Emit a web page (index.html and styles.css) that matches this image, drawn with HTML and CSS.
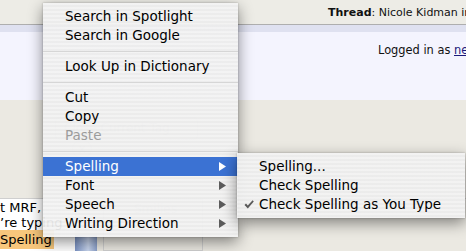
FILE: index.html
```html
<!DOCTYPE html>
<html lang="en">
<head>
  <meta charset="UTF-8" />
  <title>Spelling menu</title>
  <link rel="stylesheet" href="styles.css">
</head>
<body>
  <div class="page">
    <div class="topbar"><b>Thread</b>: Nicole Kidman in</div>
    <div class="band"></div>
    <div class="login">Logged in as <a href="#">newbie</a></div>

    <div class="editor">
      <div class="toolbar">
        <div class="tag-btn">Close Current Tag <span class="x">x</span></div>
      </div>
      <div class="compose">
        <div class="textarea">
          <div>t MRF,</div>
          <div>’re typing</div>
          <div><span class="misspelt">Spelling</span></div>
        </div>
        <div class="scroll"></div>
        <div class="smilies">Smilies</div>
      </div>
    </div>
  </div>

  <!-- context menu -->
  <div class="menu main-menu">
    <div class="item">Search in Spotlight</div>
    <div class="item">Search in Google</div>
    <div class="sep"></div>
    <div class="item">Look Up in Dictionary</div>
    <div class="sep"></div>
    <div class="item">Cut</div>
    <div class="item">Copy</div>
    <div class="item disabled">Paste</div>
    <div class="sep"></div>
    <div class="item sub active">Spelling
      <svg class="arrow" viewBox="0 0 7 9"><path d="M0 0L7 4.5L0 9Z" /></svg>
    </div>
    <div class="item sub">Font
      <svg class="arrow" viewBox="0 0 7 9"><path d="M0 0L7 4.5L0 9Z" /></svg>
    </div>
    <div class="item sub">Speech
      <svg class="arrow" viewBox="0 0 7 9"><path d="M0 0L7 4.5L0 9Z" /></svg>
    </div>
    <div class="item sub">Writing Direction
      <svg class="arrow" viewBox="0 0 7 9"><path d="M0 0L7 4.5L0 9Z" /></svg>
    </div>
  </div>

  <div class="menu sub-menu">
    <div class="item">Spelling...</div>
    <div class="item">Check Spelling</div>
    <div class="item checked">
      <svg class="check" viewBox="0 0 10 9"><path d="M0.5 5L2 3.6L3.8 5.6L8.6 0.3L9.8 1.4L3.8 8.4Z" /></svg>
      Check Spelling as You Type
    </div>
  </div>
</body>
</html>
```

FILE: styles.css
```css
* {
  margin: 0;
  padding: 0;
  box-sizing: border-box;
}

body {
  width: 466px;
  height: 251px;
  overflow: hidden;
  background: #f4f4fe;
  font-family: 'DejaVu Sans', Verdana, sans-serif;
  position: relative;
}

/* Page behind the menu */
.page {
  height: 251px;
  display: flex;
  flex-direction: column;
}

.topbar {
  height: 25px;
  background: #edece6;
  border-bottom: 1px solid #aeaeae;
  padding-left: 328px;
  font-size: 11px;
  line-height: 25px;
  white-space: nowrap;
  overflow: hidden;
  color: #111;
}

.band {
  height: 7px;
  background: #dfe1f0;
}

.login {
  height: 68px;
  padding: 10px 0 0 378px;
  font-size: 11.4px;
  line-height: 16px;
  white-space: nowrap;
  overflow: hidden;
  color: #111;
}

.login a {
  color: #1a1a7a;
}

.editor {
  flex: 1;
  background: #ebe9e2;
  display: flex;
  flex-direction: column;
}

.toolbar {
  height: 98px;
  padding: 17px 0 0 55px;
}

.tag-btn {
  width: 143px;
  height: 23px;
  border: 1px solid #d8d8d8;
  border-radius: 4px;
  font-size: 12px;
  line-height: 21px;
  padding-left: 8px;
  color: #c9c9c9;
}

.tag-btn .x {
  display: inline-block;
  width: 20px;
  height: 18px;
  margin-left: 8px;
  border: 1px solid #d5d5d5;
  border-radius: 9px;
  text-align: center;
  line-height: 16px;
}

.compose {
  flex: 1;
  display: flex;
  border-top: 1px solid #cfcfcf;
}

.textarea {
  width: 75px;
  background: #fff;
  font-size: 13px;
  line-height: 14.5px;
  padding-top: 2px;
  white-space: nowrap;
  color: #000;
}

.misspelt {
  display: inline-block;
  background: #f8c77c;
  padding-right: 2px;
  line-height: 19px;
}

.scroll {
  width: 22px;
  background: linear-gradient(to right, #7b93c4, #c9d6ee 60%, #8a9fc9);
  margin-top: 36px;
}

.smilies {
  width: 100px;
  margin-left: 6px;
  border: 1px solid #d0d0d0;
  font-size: 12px;
  color: #cccccc;
  padding: 2px 0 0 30px;
}

/* Context menus */
.menu {
  position: absolute;
  padding: 4px 0;
  background: repeating-linear-gradient(to bottom,
    rgba(243, 243, 243, 0.94) 0 2px,
    rgba(236, 236, 236, 0.94) 2px 4px);
  box-shadow: 0 5px 14px rgba(0, 0, 0, 0.45), 0 0 2px rgba(0, 0, 0, 0.25);
  font-family: 'DejaVu Sans', 'Lucida Grande', sans-serif;
  font-size: 13.5px;
  color: #000;
}

.main-menu {
  left: 43px;
  top: 3px;
  width: 195px;
}

.sub-menu {
  left: 237px;
  top: 153px;
  width: 228px;
}

.item {
  height: 19px;
  line-height: 19px;
  padding-left: 22px;
  white-space: nowrap;
  display: flex;
  align-items: center;
}

.item.disabled {
  color: #9c9c9c;
}

.item.active {
  background: #3b72d3;
  color: #fff;
}

.sub {
  justify-content: space-between;
  padding-right: 12px;
}

.arrow {
  width: 7px;
  height: 9px;
  fill: #5b5b5b;
}

.active .arrow {
  fill: #fff;
}

.checked {
  padding-left: 7px;
}

.check {
  width: 10px;
  height: 9px;
  fill: #5a5a5a;
  margin-right: 5px;
}

.sep {
  height: 12px;
  display: flex;
  align-items: center;
}

.sep::after {
  content: '';
  flex: 1;
  height: 1px;
  background: #d6d6d6;
}
```
